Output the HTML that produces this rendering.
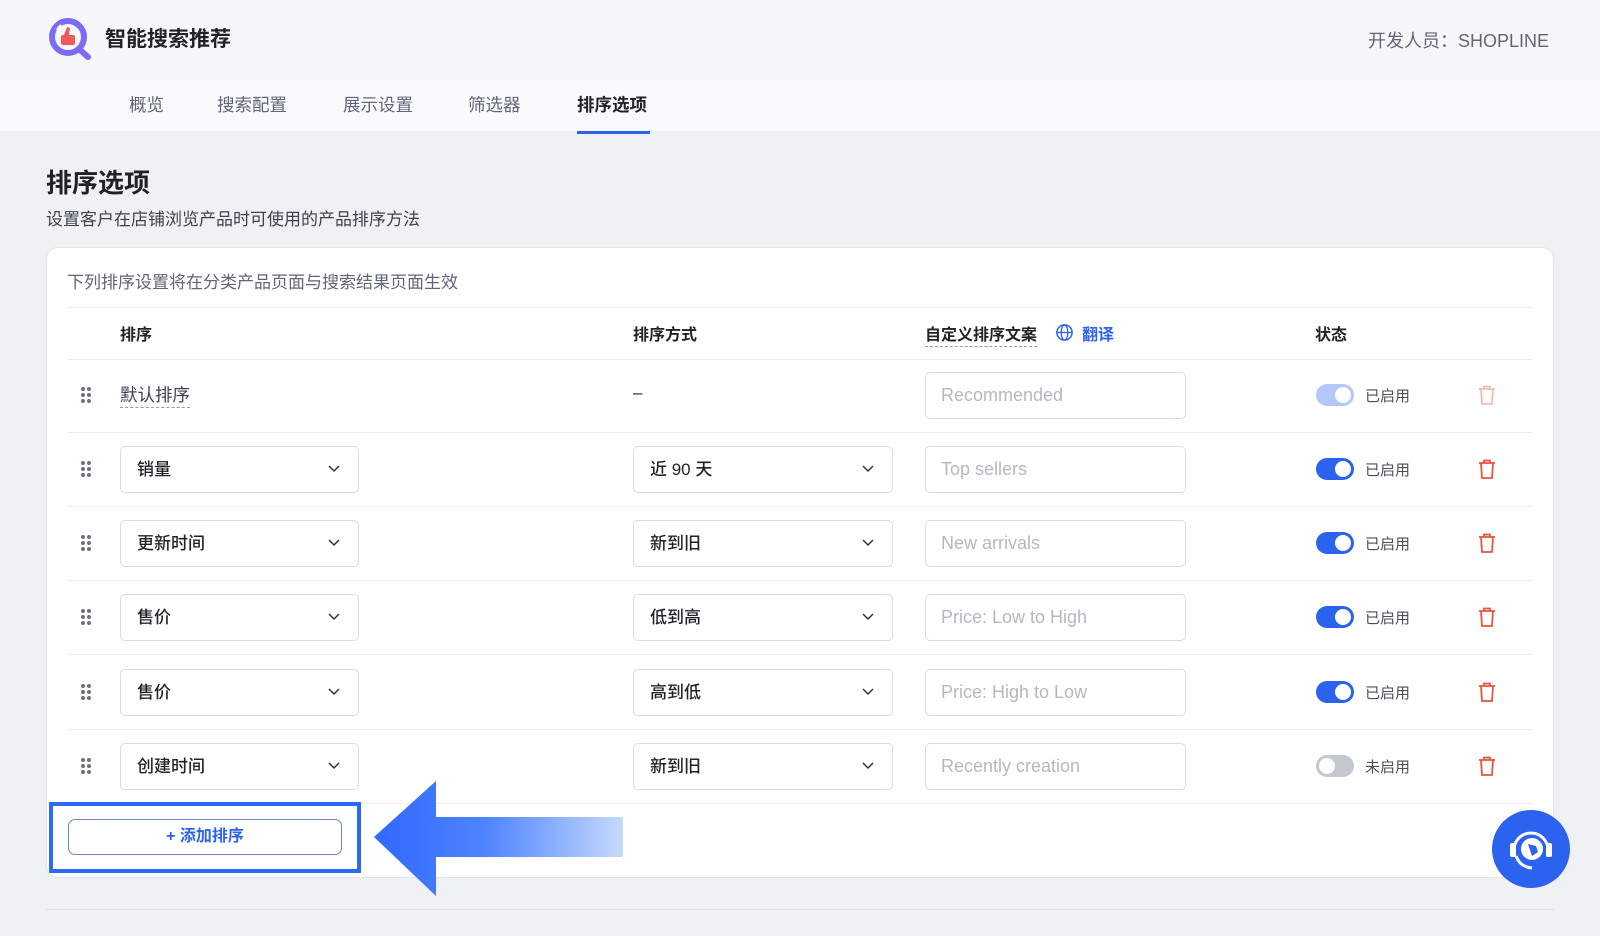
<!DOCTYPE html>
<html><head><meta charset="utf-8"><style>
*{box-sizing:border-box;margin:0;padding:0}
body{width:1600px;height:936px;background:#f0f1f5;font-family:"Liberation Sans","Noto Sans CJK SC",sans-serif;color:#1f2329;position:relative;overflow:hidden}
.a{position:absolute}
.hdr{left:0;top:0;width:1600px;height:80px;background:#f6f7fa}
.nav{left:0;top:80px;width:1600px;height:51px;background:#f9fafc}
.tab{top:92px;font-size:17.5px;color:#5f6675}
.card{left:46px;top:247px;width:1508px;height:631px;background:#fff;border:1px solid #e3e5ea;border-radius:12px}
.line{height:1px;background:#eceef2;left:67px;width:1465px}
.th{top:321px;font-size:16px;font-weight:bold;color:#1f2329}
.sel{height:47px;border:1px solid #d9dce3;border-radius:5px;background:#fff;font-size:17px;padding-left:16px;line-height:45px;font-weight:500}
.sel svg{position:absolute;right:18px;top:18px}
.inp{left:925px;width:261px;height:47px;border:1px solid #d9dce3;border-radius:5px;font-size:18px;color:#b3b8c2;padding-left:15px;line-height:45px}
.tg{left:1316px;width:38px;height:22px;border-radius:11px;background:#2b63ee}
.tg::after{content:"";position:absolute;right:3px;top:3px;width:16px;height:16px;border-radius:50%;background:#fff}
.tg.off{background:#c3c7cf}.tg.off::after{left:3px;right:auto}
.tg.dis{background:#b3c7fb}
.tl{left:1365px;font-size:15px;color:#4a4f5a}
.dots{left:80px;width:12px;height:18px}
</style></head><body>
<div class="a hdr"></div>
<svg class="a" style="left:48px;top:17px" width="46" height="44" viewBox="0 0 46 44"><circle cx="20" cy="20" r="16" fill="none" stroke="#7b6cf3" stroke-width="6"/><path d="M31 32 L40 40" stroke="#7b6cf3" stroke-width="6" stroke-linecap="round"/><rect x="13" y="18" width="14" height="10" rx="2" fill="#ee5b5b"/><path d="M16 18 L19 10 L22 11 L21 18Z" fill="#ee5b5b"/><path d="M9 13 A13 13 0 0 1 13 8" stroke="#fff" stroke-width="2" fill="none"/></svg>
<div class="a" style="left:105px;top:23px;font-size:21px;font-weight:bold">智能搜索推荐</div>
<div class="a" style="right:51px;top:27px;font-size:18px;color:#5f6675">开发人员：SHOPLINE</div>
<div class="a nav"></div>
<div class="a tab" style="left:129px">概览</div>
<div class="a tab" style="left:217px">搜索配置</div>
<div class="a tab" style="left:343px">展示设置</div>
<div class="a tab" style="left:468px">筛选器</div>
<div class="a tab" style="left:577px;color:#1f2329;font-weight:bold">排序选项</div>
<div class="a" style="left:577px;top:131px;width:73px;height:3px;background:#2b63ee"></div>
<div class="a" style="left:46px;top:163px;font-size:26px;font-weight:bold">排序选项</div>
<div class="a" style="left:46px;top:205px;font-size:17px;color:#3d424d">设置客户在店铺浏览产品时可使用的产品排序方法</div>
<div class="a card"></div>
<div class="a" style="left:67px;top:268px;font-size:17px;color:#5f6675">下列排序设置将在分类产品页面与搜索结果页面生效</div>
<div class="a line" style="top:307px"></div>
<div class="a th" style="left:120px">排序</div>
<div class="a th" style="left:633px">排序方式</div>
<div class="a th" style="left:925px;border-bottom:1px dashed #999;padding-bottom:1px">自定义排序文案</div>
<svg class="a" style="left:1055px;top:323px" width="19" height="19" viewBox="0 0 20 20"><circle cx="10" cy="10" r="8" fill="none" stroke="#2b63ee" stroke-width="1.6"/><ellipse cx="10" cy="10" rx="3.5" ry="8" fill="none" stroke="#2b63ee" stroke-width="1.4"/><path d="M2 10H18" stroke="#2b63ee" stroke-width="1.4"/></svg>
<div class="a th" style="left:1082px;color:#2b63ee">翻译</div>
<div class="a th" style="left:1315px">状态</div>
<div class="a line" style="top:359px"></div>

<svg class="a dots" style="top:386px" viewBox="0 0 12 18"><g fill="#6b7280"><circle cx="3" cy="3" r="2"/><circle cx="9" cy="3" r="2"/><circle cx="3" cy="9" r="2"/><circle cx="9" cy="9" r="2"/><circle cx="3" cy="15" r="2"/><circle cx="9" cy="15" r="2"/></g></svg>
<div class="a" style="left:120px;top:382px;font-size:17.5px;color:#3d424d;border-bottom:1px dashed #999">默认排序</div>
<div class="a" style="left:633px;top:383px;font-size:17px">–</div>
<div class="a inp" style="top:372px">Recommended</div>
<div class="a tg dis" style="top:384px"></div><div class="a tl" style="top:385px">已启用</div>
<svg class="a" style="left:1478px;top:385px" width="18" height="20" viewBox="0 0 18 20"><path d="M1 4H17M6 4V1.5H12V4M3 4L4 19H14L15 4" fill="none" stroke="#f3b3a8" stroke-width="1.6"/></svg>
<div class="a line" style="top:432px"></div>

<div id="rows"></div>
<script>
var R=[["销量","近 90 天","Top sellers",1],["更新时间","新到旧","New arrivals",1],["售价","低到高","Price: Low to High",1],["售价","高到低","Price: High to Low",1],["创建时间","新到旧","Recently creation",0]];
var h="",chev='<svg width="12" height="8" viewBox="0 0 12 8"><path d="M1 1L6 6L11 1" fill="none" stroke="#333" stroke-width="1.5"/></svg>';
R.forEach(function(r,i){var c=469+i*74.2,t=c-23;
h+='<svg class="a dots" style="top:'+(c-9)+'px" viewBox="0 0 12 18"><g fill="#6b7280"><circle cx="3" cy="3" r="2"/><circle cx="9" cy="3" r="2"/><circle cx="3" cy="9" r="2"/><circle cx="9" cy="9" r="2"/><circle cx="3" cy="15" r="2"/><circle cx="9" cy="15" r="2"/></g></svg>';
h+='<div class="a sel" style="left:120px;width:239px;top:'+t+'px">'+r[0]+chev+'</div>';
h+='<div class="a sel" style="left:633px;width:260px;top:'+t+'px">'+r[1]+chev+'</div>';
h+='<div class="a inp" style="top:'+t+'px">'+r[2]+'</div>';
h+='<div class="a tg'+(r[3]?'':' off')+'" style="top:'+(c-11)+'px"></div><div class="a tl" style="top:'+(c-10)+'px">'+(r[3]?'已启用':'未启用')+'</div>';
h+='<svg class="a" style="left:1478px;top:'+(c-10)+'px" width="18" height="20" viewBox="0 0 18 20"><path d="M1 4H17M6 4V1.5H12V4M3 4L4 19H14L15 4" fill="none" stroke="#e8543c" stroke-width="1.8"/></svg>';
h+='<div class="a line" style="top:'+(c+37)+'px"></div>';});
document.getElementById("rows").innerHTML=h;
</script>

<div class="a" style="left:49px;top:802px;width:312px;height:71px;border:4px solid #2a6af6"></div>
<div class="a" style="left:68px;top:819px;width:274px;height:36px;border:1.5px solid #6b85d0;border-radius:7px;background:#fff;text-align:center;line-height:33px;font-size:16px;font-weight:bold;color:#2b63ee">+ 添加排序</div>
<svg class="a" style="left:370px;top:778px" width="260" height="120" viewBox="0 0 260 120"><defs><linearGradient id="g" x1="0" x2="1"><stop offset="0" stop-color="#2f69ff"/><stop offset="0.45" stop-color="#4f84ff"/><stop offset="1" stop-color="#c6dafe"/></linearGradient></defs><path d="M4 59 L66 3 L66 39 L253 39 L253 79 L66 79 L66 118 Z" fill="url(#g)"/></svg>
<div class="a" style="left:46px;top:909px;width:1508px;height:1px;background:#dfe1e6"></div>
<div class="a" style="left:1492px;top:810px;width:78px;height:78px;border-radius:50%;background:#2b63ee"></div>
<svg class="a" style="left:1492px;top:810px" width="78" height="78" viewBox="0 0 78 78"><path d="M22 40 A17 17 0 1 1 56 40" fill="none" stroke="#fff" stroke-width="3"/><rect x="18" y="33" width="6" height="14" rx="2" fill="#fff"/><rect x="54" y="33" width="6" height="14" rx="2" fill="#fff"/><path d="M24 46 Q28 57 40 58" fill="none" stroke="#fff" stroke-width="3"/><circle cx="40" cy="39" r="11" fill="#fff"/><path d="M36 34 L44 36 L46 42 L40 46Z" fill="#2b63ee"/></svg>
</body></html>
